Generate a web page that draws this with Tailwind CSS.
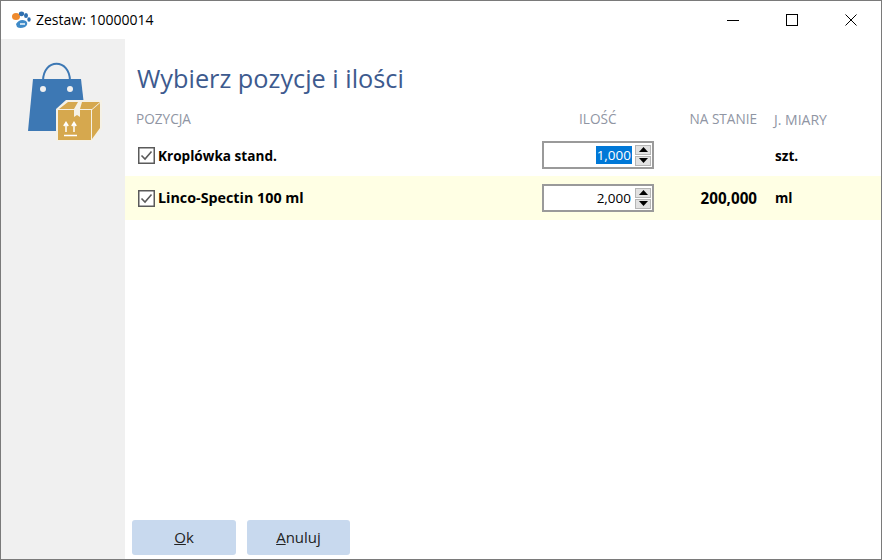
<!DOCTYPE html>
<html lang="pl">
<head>
    <meta charset="UTF-8">
    <meta name="viewport" content="width=device-width, initial-scale=1.0">
    <title>Zestaw: 10000014</title>
    <script src="https://cdn.jsdelivr.net/npm/@tailwindcss/browser@4"></script>
</head>
<body class="bg-white font-['Open_Sans','Noto_Sans',sans-serif] text-black overflow-hidden">
    <div class="w-[882px] h-[560px] border border-[#7a7a7a] flex flex-col bg-white">
        <!-- Pasek tytułu -->
        <header class="h-[38px] flex items-center shrink-0">
            <svg class="ml-[10px] w-[20px] h-[18px]" viewBox="0 0 20 18">
                <ellipse cx="5" cy="5.5" rx="4" ry="3.6" fill="#ee8a2e"/>
                <ellipse cx="10.5" cy="2.8" rx="2.6" ry="2.4" fill="#2f6fb0"/>
                <ellipse cx="15" cy="4.5" rx="2" ry="2.6" fill="#2f6fb0"/>
                <ellipse cx="18" cy="8.5" rx="1.7" ry="2.2" fill="#2f6fb0"/>
                <path d="M5 13 Q9 7 15 10 Q18 13 14 16 Q9 18 6 16 Z" fill="#3f8ac8"/>
                <path d="M9 13 H14" stroke="#fff" stroke-width="1.4"/>
            </svg>
            <span class="ml-[5px] text-[14px] leading-none">Zestaw: 10000014</span>
            <div class="ml-auto flex items-center h-full pr-[1px]">
                <button class="w-[59px] h-full flex items-center justify-center">
                    <svg class="w-[12px] h-[12px]" viewBox="0 0 12 12"><path d="M0 6.5H12" stroke="#000" fill="none"/></svg>
                </button>
                <button class="w-[59px] h-full flex items-center justify-center">
                    <svg class="w-[12px] h-[12px]" viewBox="0 0 12 12"><rect x="0.5" y="0.5" width="11" height="11" stroke="#000" fill="none"/></svg>
                </button>
                <button class="w-[59px] h-full flex items-center justify-center">
                    <svg class="w-[12px] h-[12px]" viewBox="0 0 12 12"><path d="M0.5 0.5L11.5 11.5M11.5 0.5L0.5 11.5" stroke="#000" fill="none"/></svg>
                </button>
            </div>
        </header>

        <div class="flex flex-1 min-h-0">
            <!-- Panel boczny z ikoną -->
            <aside class="w-[124px] bg-[#f0f0f0] shrink-0 pt-[20px] pl-[26px]">
                <svg class="w-[76px] h-[82px]" viewBox="0 0 76 82">
                    <path d="M16 22 C16 -1 43 -1 43 22" fill="none" stroke="#3d78b4" stroke-width="2"/>
                    <path d="M6 20 H54 L60 72 H1 Z" fill="#3d78b4"/>
                    <circle cx="16" cy="30" r="3" fill="#f0f0f0"/>
                    <circle cx="43" cy="30" r="3" fill="#f0f0f0"/>
                    <path d="M29 50 L39 41 H75 V69 L65 82 H29 Z" fill="#f5f1e6"/>
                    <path d="M31 51 H47 V58 L50 56 L53 58 V51 H64 V81 H31 Z" fill="#d6a84e"/>
                    <path d="M32 50 L41 43 H51 L47 50 Z M53 50 L55 43 H73 L65 50 Z" fill="#d6a84e"/>
                    <path d="M65 51 L73 44 V69 L65 80 Z" fill="#d6a84e"/>
                    <path d="M39 73 V64 M36.8 67 L39 63.5 L41.2 67 M47 73 V64 M44.8 67 L47 63.5 L49.2 67 M37 76.5 H50" stroke="#fff" stroke-width="1.5" fill="none"/>
                </svg>
            </aside>

            <!-- Zawartość -->
            <main class="flex-1 min-w-0 flex flex-col">
                <h1 class="pl-[12px] pt-[21px] h-[60px] text-[25.3px] leading-[36px] text-[#3d5a8e]">Wybierz pozycje i ilości</h1>

                <div class="flex items-center h-[37px] pt-[4px] text-[13.6px] text-[#8f95a3]">
                    <div class="pl-[11px] w-[417px]">POZYCJA</div>
                    <div class="w-[112px] pl-[37px]">ILOŚĆ</div>
                    <div class="w-[103px] text-right">NA STANIE</div>
                    <div class="pl-[17px] text-[14px]">J. MIARY</div>
                </div>

                <div class="flex items-center h-[40px] text-[13.6px] font-bold">
                    <div class="w-[417px] pl-[13px] flex items-center gap-[3px]">
                        <svg class="w-[17px] h-[17px]" viewBox="0 0 17 17"><rect x="0.75" y="0.75" width="15.5" height="15.5" fill="#fff" stroke="#5a5a5a" stroke-width="1.5"/><path d="M3.5 8.5 L7 12 L13.5 4.5" fill="none" stroke="#5a5a5a" stroke-width="1.6"/></svg>
                        <span class="pt-[1px]">Kroplówka stand.</span>
                    </div>
                    <div class="w-[112px] h-[28px] mb-[2px] border-2 border-[#9a9a9a] flex items-center bg-white font-normal text-[13.5px]">
                        <div class="flex-1 flex justify-end"><span class="bg-[#0078d7] text-white h-[18px] leading-[18px] px-[1px]">1,000</span></div>
                        <div class="w-[16px] h-[21px] ml-[3px] mr-[1px] flex flex-col gap-[1px]">
                            <div class="flex-1 bg-[#e1e1e1] border border-[#b5b5b5] flex items-center justify-center"><svg class="w-[9px] h-[5px]" viewBox="0 0 9 5"><path d="M4.5 0L9 5H0Z"/></svg></div>
                            <div class="flex-1 bg-[#e1e1e1] border border-[#b5b5b5] flex items-center justify-center"><svg class="w-[9px] h-[5px]" viewBox="0 0 9 5"><path d="M0 0H9L4.5 5Z"/></svg></div>
                        </div>
                    </div>
                    <div class="w-[103px] text-right"></div>
                    <div class="pl-[18px] pt-[1px]">szt.</div>
                </div>

                <div class="flex items-center h-[44px] bg-[#ffffe4] text-[14.3px] font-bold">
                    <div class="w-[417px] pl-[13px] flex items-center gap-[3px]">
                        <svg class="w-[17px] h-[17px]" viewBox="0 0 17 17"><rect x="0.75" y="0.75" width="15.5" height="15.5" fill="#fff" stroke="#5a5a5a" stroke-width="1.5"/><path d="M3.5 8.5 L7 12 L13.5 4.5" fill="none" stroke="#5a5a5a" stroke-width="1.6"/></svg>
                        <span>Linco-Spectin 100 ml</span>
                    </div>
                    <div class="w-[112px] h-[28px] border-2 border-[#9a9a9a] flex items-center bg-white font-normal text-[13.5px]">
                        <div class="flex-1 flex justify-end"><span class="h-[18px] leading-[18px] px-[1px]">2,000</span></div>
                        <div class="w-[16px] h-[21px] ml-[3px] mr-[1px] flex flex-col gap-[1px]">
                            <div class="flex-1 bg-[#e1e1e1] border border-[#b5b5b5] flex items-center justify-center"><svg class="w-[9px] h-[5px]" viewBox="0 0 9 5"><path d="M4.5 0L9 5H0Z"/></svg></div>
                            <div class="flex-1 bg-[#e1e1e1] border border-[#b5b5b5] flex items-center justify-center"><svg class="w-[9px] h-[5px]" viewBox="0 0 9 5"><path d="M0 0H9L4.5 5Z"/></svg></div>
                        </div>
                    </div>
                    <div class="w-[103px] text-right text-[15.2px]">200,000</div>
                    <div class="pl-[18px] text-[13.6px]">ml</div>
                </div>

                <div class="mt-auto flex gap-[11px] pl-[7px] pb-[4px]">
                    <button class="w-[104px] h-[35px] bg-[#c8d9ee] rounded-[3px] text-[15px] text-[#222]"><span class="underline">O</span>k</button>
                    <button class="w-[103px] h-[35px] bg-[#c8d9ee] rounded-[3px] text-[15px] text-[#222]"><span class="underline">A</span>nuluj</button>
                </div>
            </main>
        </div>
    </div>
</body>
</html>
